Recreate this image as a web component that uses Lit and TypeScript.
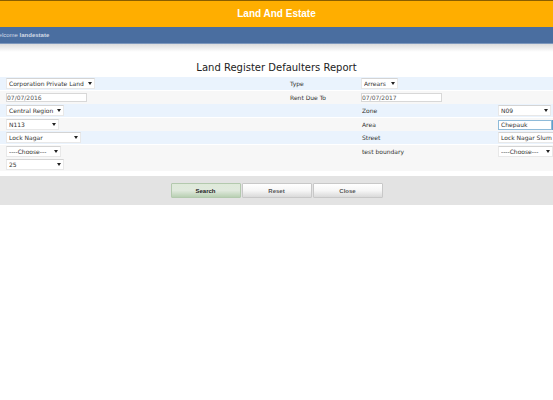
import { LitElement, html, css, nothing } from "lit";
import { customElement } from "lit/decorators.js";

interface Pick {
  kind: "select" | "date" | "combo";
  value: string;
  size: string;
  label?: string;
  name: string;
}
interface Row {
  layout: "wide" | "split";
  tone: "blue" | "grey";
  left: Pick;
  right?: Pick;
}

const rows: Row[] = [
  { layout: "wide", tone: "blue",
    left: { kind: "select", value: "Corporation Private Land", size: "xl", name: "land" },
    right: { kind: "select", value: "Arrears", size: "xs", label: "Type", name: "type" } },
  { layout: "wide", tone: "grey",
    left: { kind: "date", value: "07/07/2016", size: "date", name: "from" },
    right: { kind: "date", value: "07/07/2017", size: "date", label: "Rent Due To", name: "to" } },
  { layout: "split", tone: "blue",
    left: { kind: "select", value: "Central Region", size: "md", name: "region" },
    right: { kind: "select", value: "N09", size: "sm", label: "Zone", name: "zone" } },
  { layout: "split", tone: "grey",
    left: { kind: "select", value: "N113", size: "sm", name: "ward" },
    right: { kind: "combo", value: "Chepauk", size: "combo", label: "Area", name: "area" } },
  { layout: "split", tone: "blue",
    left: { kind: "select", value: "Lock Nagar", size: "lg", name: "locality" },
    right: { kind: "select", value: "Lock Nagar Slum", size: "lg", label: "Street", name: "street" } },
  { layout: "split", tone: "grey",
    left: { kind: "select", value: "----Choose---", size: "choose", name: "choice" },
    right: { kind: "select", value: "----Choose---", size: "choose", label: "test boundary", name: "boundary" } },
  { layout: "split", tone: "grey",
    left: { kind: "select", value: "25", size: "md", name: "count" } },
];

@customElement("app-root")
export class AppRoot extends LitElement {
  static styles = css`
    :host {
      display: block;
      overflow: hidden;
      background: #fff;
      color: #333;
      font: 6px/8px "DejaVu Sans", Verdana, sans-serif;
    }
    .banner {
      border-top: 1px solid #8a5e00;
      background: #ffae00;
      padding: 7px 0;
      text-align: center;
    }
    .banner h1 {
      margin: 0;
      color: #fff;
      font: bold 10px/12px "Liberation Sans", Arial, sans-serif;
    }
    .welcome {
      background: #4a6ea0;
      border-bottom: 1px solid #7d97bc;
      color: #d3dbe6;
      padding: 4px 0;
      font: 6px/8px "Liberation Sans", Arial, sans-serif;
      white-space: nowrap;
    }
    .welcome span {
      display: block;
      margin-left: -7px;
    }
    .shade {
      height: 8px;
      background: linear-gradient(#dcdcdc, #fff);
    }
    h2 {
      margin: 0;
      padding: 9px 0 3px;
      text-align: center;
      color: #222;
      font: 10px/13px "DejaVu Sans", Verdana, sans-serif;
    }
    .row {
      display: grid;
      align-items: center;
      height: 13px;
      margin-bottom: 1px;
      padding-left: 6px;
      white-space: nowrap;
    }
    .row.grey { background: #f7f7f7; margin-bottom: 0; }
    .row.blue { background: #eaf3fd; }
    .row.wide { grid-template-columns: minmax(0, 284fr) minmax(0, 71fr) minmax(0, 192fr); }
    .row.split { grid-template-columns: minmax(0, 356fr) minmax(0, 136fr) minmax(0, 55fr); }
    .pick {
      display: grid;
      align-items: center;
      height: 11px;
    }
    .pick > * { grid-area: 1 / 1; }
    .pick::after {
      content: "";
      grid-area: 1 / 1;
      justify-self: end;
      margin-right: 3px;
      border: 2px solid transparent;
      border-top: 3px solid #222;
      border-bottom: 0;
      pointer-events: none;
    }
    select, input {
      box-sizing: border-box;
      appearance: none;
      width: 100%;
      margin: 0;
      border: 1px solid #e8e8e8;
      border-radius: 0;
      background: #fff;
      color: #333;
      font: inherit;
      outline: none;
    }
    select { height: 11px; padding: 0 2px; border-top-color: #d4d4d4; }
    input { height: 9px; padding: 0; color: #555; border-color: #d8d8d8; }
    .xl { width: 89px; }
    .lg { width: 75px; }
    .md { width: 58px; }
    .sm { width: 53px; }
    .xs { width: 37px; }
    .choose { width: 55px; }
    .row .date { width: 81px; display: block; }
    .combo { display: flex; width: 62px; height: 10px; }
    .combo input { height: 10px; padding: 0 0 0 2px; border-color: #8fbbd9; color: #333; }
    .combo button {
      flex: none;
      width: 8px;
      padding: 0;
      border: 1px solid #5f9fca;
      background: #d5e9f7;
    }
    .actions {
      display: flex;
      justify-content: center;
      gap: 1px;
      margin-top: 5px;
      padding: 7px 0;
      background: #e3e3e3;
    }
    .actions button {
      width: 70px;
      height: 15px;
      padding: 0;
      border: 1px solid #c8c8c8;
      border-radius: 1px;
      background: linear-gradient(#fff, #f6f6f6 50%, #dadada);
      color: #555;
      font: bold 6px/8px "Liberation Sans", Arial, sans-serif;
    }
    .actions .primary {
      border-color: #b3c9ae;
      background: linear-gradient(#dfeada, #e0e9dd 50%, #b9d0b3);
      color: #222;
    }
  `;

  private control(p: Pick) {
    const aria = p.label ? nothing : p.name;
    if (p.kind === "date")
      return html`<input class="date" id=${p.name} aria-label=${aria} .value=${p.value} />`;
    if (p.kind === "combo")
      return html`<div class="combo"><input id=${p.name} aria-label=${aria} .value=${p.value} /><button type="button" aria-label="open"></button></div>`;
    return html`<div class="pick ${p.size}"><select id=${p.name} aria-label=${aria}><option>${p.value}</option></select></div>`;
  }

  render() {
    return html`
      <header>
        <div class="banner"><h1>Land And Estate</h1></div>
        <div class="welcome"><span>Welcome <b>landestate</b></span></div>
        <div class="shade"></div>
      </header>
      <main>
        <h2>Land Register Defaulters Report</h2>
        <form @submit=${(e: Event) => e.preventDefault()}>
          ${rows.map((r) => html`<div class="row ${r.layout} ${r.tone}">
            ${this.control(r.left)}
            ${r.right ? html`<label for=${r.right.name}>${r.right.label}</label>${this.control(r.right)}` : nothing}
          </div>`)}
          <div class="actions">
            <button class="primary" type="submit">Search</button>
            <button type="reset">Reset</button>
            <button type="button">Close</button>
          </div>
        </form>
      </main>
    `;
  }
}
